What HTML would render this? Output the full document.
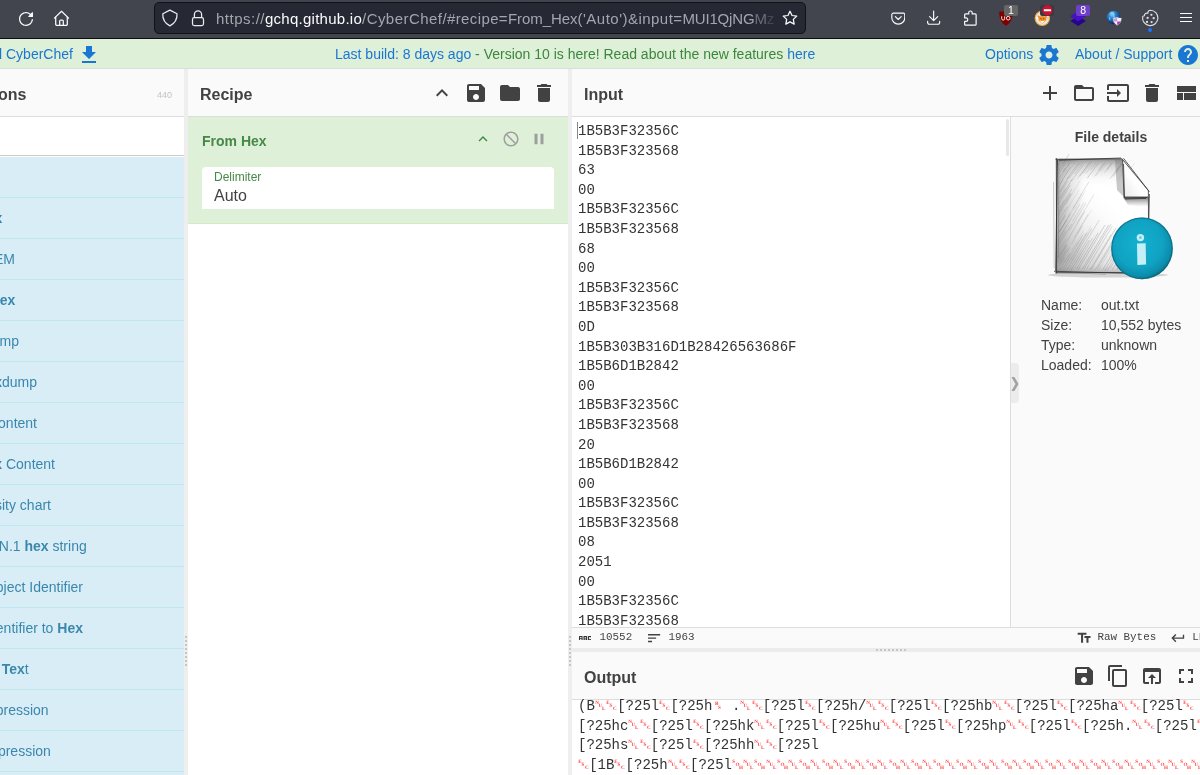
<!DOCTYPE html>
<html>
<head>
<meta charset="utf-8">
<title>CyberChef</title>
<style>
*{box-sizing:border-box;margin:0;padding:0}
html,body{width:1200px;height:775px;overflow:hidden;background:#fff;font-family:"Liberation Sans",sans-serif;color:#424242}
.abs{position:absolute}
#chrome{position:absolute;left:0;top:0;width:1200px;height:39px;background:#42454e;border-bottom:1px solid #0e0e10}
#urlbar{position:absolute;left:154px;top:2px;width:651.5px;height:32px;background:#262834;border-radius:5px;border:1px solid #111218}
#urltext{position:absolute;left:61px;top:6.500px;font-size:15px;line-height:18px;color:#a5a5ad;white-space:nowrap}
#urltext b{font-weight:normal;color:#fbfbfe}
#banner{position:absolute;left:0;top:39px;width:1200px;height:30px;background:#dff0d8;border-bottom:1px solid #ddd;font-size:14px;line-height:30px;white-space:nowrap}
.blue{color:#1976d2}
.green{color:#3c863d}
.title{position:absolute;top:69px;height:48px;background:#fafafa;border-bottom:1px solid #ddd;font-weight:bold;font-size:16px;line-height:51px;color:#424242}
.gutter{position:absolute;background:#eee}
.ico{position:absolute;width:24px;height:24px;fill:#424242}
#ops{position:absolute;left:0;top:157px;width:184px;height:618px;background:#d9edf7}
.op{position:absolute;left:0;width:184px;height:41px;border-bottom:1px solid #bce8f1;font-size:14px;line-height:40px;color:#3a87ad;white-space:nowrap}
.op b{font-weight:bold}
#recop{position:absolute;left:188px;top:117px;width:380px;height:107px;background:#dff0d8;border-bottom:1px solid #d6e9c6}
#arg{position:absolute;left:14px;top:50px;width:352px;height:42px;background:#fff;border-radius:4px 4px 0 0}
.mono{font-family:"Liberation Mono",monospace}
#intext{position:absolute;left:578px;top:122px;font-family:"Liberation Mono",monospace;font-size:14px;line-height:19.6px;color:#333;white-space:pre}
#side{position:absolute;left:1010px;top:117px;width:190px;height:510px;background:#fafafa;border-left:1px solid #ddd}
#status{position:absolute;left:572px;top:627px;width:628px;height:21px;background:#fafafa;border-top:1px solid #ddd;font-family:"Liberation Mono",monospace;font-size:10.9px;color:#444;line-height:19px;white-space:nowrap}
#outtext{position:absolute;left:578px;top:697px;font-family:"Liberation Mono",monospace;font-size:14px;line-height:19.6px;color:#333;white-space:pre}
.cp{display:inline-block;width:11.2px;height:11.2px;vertical-align:baseline;fill:#ff4040;font-family:"Liberation Serif",serif;font-weight:bold;font-size:5.1px;overflow:visible;text-rendering:geometricPrecision}
</style>
</head>
<body>
<div id="root" style="position:absolute;left:0;top:0;width:1200px;height:775px;overflow:hidden;will-change:transform">
<!-- BROWSER CHROME -->
<div id="chrome">
  <!-- reload -->
  <svg class="abs" style="left:18px;top:11px" width="16" height="16" viewBox="0 0 16 16" fill="#fbfbfe"><path d="M10.707 6H14.7l.3-.3V1.707a.5.5 0 0 0-.854-.354l-1.459 1.459A6.95 6.95 0 0 0 8 1C4.141 1 1 4.141 1 8s3.141 7 7 7a6.97 6.97 0 0 0 6.968-6.322.626.626 0 0 0-.562-.682.635.635 0 0 0-.682.562A5.726 5.726 0 0 1 8 13.75c-3.171 0-5.75-2.579-5.75-5.75S4.829 2.25 8 2.25a5.71 5.71 0 0 1 3.805 1.445l-1.451 1.451a.5.5 0 0 0 .353.854z"/></svg>
  <!-- home -->
  <svg class="abs" style="left:53px;top:10px" width="17" height="17" viewBox="0 0 17 17" fill="none" stroke="#fbfbfe" stroke-width="1.250" stroke-linejoin="round" stroke-linecap="round"><path d="M1.400 8.100L8.500 1.300L15.600 8.100"/><path d="M2.700 7V14.200a1.200 1.200 0 0 0 1.200 1.200H13.100a1.200 1.200 0 0 0 1.200-1.200V7"/><path d="M6.700 15.400V11a1 1 0 0 1 1-1H9.300a1 1 0 0 1 1 1V15.400"/></svg>
  <!-- star -->
  <svg class="abs" style="left:782px;top:10.400px;z-index:5" width="16" height="16" viewBox="0 0 16 16" fill="none" stroke="#fbfbfe" stroke-width="1.25" stroke-linejoin="round"><path d="M8 1.2l2.05 4.3 4.7.62-3.43 3.28.85 4.7L8 11.85 3.83 14.1l.85-4.7L1.25 6.12l4.7-.62z"/></svg>
  <!-- pocket -->
  <svg class="abs" style="left:890.700px;top:10.800px" width="14.600" height="14.600" viewBox="0 0 16 16" fill="none" stroke="#fbfbfe" stroke-width="1.25" stroke-linecap="round" stroke-linejoin="round"><path d="M2.6 2.4h10.8a1.7 1.7 0 0 1 1.7 1.7v3.2a7.1 7.1 0 0 1-14.2 0V4.1a1.7 1.7 0 0 1 1.7-1.7z"/><path d="M4.8 6.2L8 9.3l3.2-3.1"/></svg>
  <!-- download -->
  <svg class="abs" style="left:926px;top:9.800px" width="15.300" height="15.300" viewBox="0 0 17 17" fill="none" stroke="#fbfbfe" stroke-width="1.3" stroke-linecap="round" stroke-linejoin="round"><path d="M8.5 1.2v10.4M4 7.4l4.5 4.4L13 7.4"/><path d="M1.8 12.6v1.4a1.8 1.8 0 0 0 1.8 1.8h9.8a1.8 1.8 0 0 0 1.8-1.8v-1.4"/></svg>
  <!-- extensions puzzle -->
  <svg class="abs" style="left:962.600px;top:9.700px" width="15.600" height="16.500" viewBox="0 0 17 18" fill="none" stroke="#fbfbfe" stroke-width="1.3" stroke-linejoin="round"><path d="M6.2 4.3V3a1.9 1.9 0 0 1 3.8 0v1.3h3.3a1 1 0 0 1 1 1v10.2a1 1 0 0 1-1 1H2.8a1 1 0 0 1-1-1v-3.1h1.5a1.9 1.9 0 0 0 0-3.8H1.8V5.3a1 1 0 0 1 1-1z"/></svg>
  <!-- ublock -->
  <svg class="abs" style="left:998px;top:10px" width="16" height="17" viewBox="0 0 16 17"><path d="M1.300 1.600C3.600 1.600 5.800 1.500 8 1.300c2.200 0.200 4.400 0.300 6.700 0.300c0.100 6.500-1.500 11.200-6.700 14.200C2.800 12.800 1.200 8.100 1.300 1.600z" fill="#800000"/><path d="M3.700 6.300v2.300a1.500 1.500 0 0 0 3 0V6.300" stroke="#fff" stroke-width="0.900" fill="none"/><circle cx="10.200" cy="8.200" r="1.800" stroke="#fff" stroke-width="0.900" fill="none"/></svg>
  <div class="abs" style="left:1004.200px;top:5px;width:13.400px;height:10.600px;background:#666;border-radius:2px;color:#fff;font-size:10.500px;line-height:11px;text-align:center">1</div>
  <!-- fox -->
  <svg class="abs" style="left:1034px;top:10px" width="17" height="17" viewBox="0 0 17 17"><circle cx="8.300" cy="8.300" r="7.200" fill="#e9e4dc" stroke="#f0a03c" stroke-width="1.100"/><path d="M3.600 5.200l2.700 1.300 2-0.500 2 0.500 2.700-1.300-0.900 5-3.800 3.600-3.800-3.600z" fill="#f28a1e"/><path d="M1.200 7l3.300 3.600-0.300-3.400z" fill="#fff"/><path d="M15.300 7l-3.300 3.600 0.300-3.400z" fill="#c9c9c9"/><path d="M5.400 10.200l2.900 3.400 2.900-3.400-2.900 1.100z" fill="#fff"/><path d="M6.300 8.600l1.300 0.400M10.300 8.600l-1.300 0.400" stroke="#6a3208" stroke-width="0.700"/></svg>
  <div class="abs" style="left:1040.300px;top:5px;width:13.500px;height:10.600px;background:#3b3b3f;border-radius:2px"></div>
  <svg class="abs" style="left:1041.500px;top:5px" width="11" height="11" viewBox="0 0 11 11"><circle cx="5.400" cy="5.300" r="5.100" fill="#cc1133"/><rect x="1.800" y="4.300" width="7.200" height="2" rx="0.300" fill="#fff"/></svg>
  <!-- layers -->
  <svg class="abs" style="left:1069px;top:10px" width="18" height="17" viewBox="0 0 18 17"><path d="M9.100 6.200l7.800 4.800-7.800 5.100-7.800-5.100z" fill="#24068a"/><path d="M9.100 1l7.800 5.200-7.800 5.300-7.800-5.300z" fill="#4610c4"/></svg>
  <div class="abs" style="left:1076.200px;top:5px;width:13.800px;height:10.600px;background:#6e40c9;border-radius:2px;color:#fff;font-size:10.500px;line-height:11px;text-align:center">8</div>
  <!-- globe -->
  <svg class="abs" style="left:1106px;top:10px" width="17" height="17" viewBox="0 0 17 17"><defs><radialGradient id="gl" cx="0.380" cy="0.280" r="0.750"><stop offset="0" stop-color="#8fd0f5"/><stop offset="0.350" stop-color="#2b86cf"/><stop offset="0.750" stop-color="#0c4a8e"/><stop offset="1" stop-color="#06223f"/></radialGradient></defs><circle cx="7.600" cy="7.500" r="6.800" fill="url(#gl)"/><path d="M4.200 3.200c1.500-0.800 3-0.600 3.600 0.400s-0.600 1.800-0.200 2.800 2 1 2.200 2.200M3 7.500c0.800 0.600 1.200 1.600 0.800 2.800" stroke="#9fe0ff" stroke-width="1.100" fill="none" stroke-opacity=".75"/><path d="M11.200 7.200c-1.200 0.700-2.600 0.900-4.100 0.900 0 3.300 1 5.600 4.100 7.200 3.100-1.600 4.100-3.900 4.100-7.200-1.500 0-2.900-0.200-4.100-0.900z" fill="#f4f0f5" stroke="#d9d2dc" stroke-width="0.400"/><path d="M11.200 7.800v3.700h-3.700c-0.200-1-0.300-1.900-0.300-2.900 1.400 0 2.800-0.200 4-0.800z" fill="#c59ad0"/><path d="M11.200 11.500h3.600c-0.500 1.500-1.600 2.600-3.600 3.600z" fill="#a33fb0"/></svg>
  <!-- cookie -->
  <svg class="abs" style="left:1141px;top:8.900px" width="18" height="18" viewBox="0 0 18 18" fill="none" stroke="#dcdce2" stroke-width="1.150"><path d="M9.300 1.200a2.500 2.500 0 0 0-2.300 3.100 2.600 2.600 0 0 0-3.600 2.500 2.300 2.300 0 0 0-1.800 1 7.700 7.700 0 1 0 7.700-6.600z" stroke-linejoin="round"/><g fill="#dcdce2" stroke="none"><circle cx="6.600" cy="8.900" r="1.150"/><circle cx="10.400" cy="5.800" r="1.150"/><circle cx="12.700" cy="9.200" r="1.150"/><circle cx="6" cy="12.900" r="1.150"/><circle cx="10.600" cy="13.100" r="1.150"/></g></svg>
  <div class="abs" style="left:1147.800px;top:28.100px;width:4.200px;height:4.200px;border-radius:2.100px;background:#1a75ff"></div>
  <!-- hamburger -->
  <div class="abs" style="left:1180px;top:12.900px;width:12.200px;height:1.400px;background:#fbfbfe"></div>
  <div class="abs" style="left:1180px;top:16.800px;width:12.200px;height:1.400px;background:#fbfbfe"></div>
  <div class="abs" style="left:1180px;top:20.700px;width:12.200px;height:1.400px;background:#fbfbfe"></div>

  <div id="urlbar">
    <!-- shield -->
    <svg class="abs" style="left:0;top:0;overflow:visible" width="30" height="30" viewBox="155 3 30 30" fill="none" stroke="#ececf0" stroke-width="1.250" stroke-linejoin="round"><path d="M169.900 10.100L177 13.700C177.300 19.200 175 23.200 169.900 25.900C164.800 23.200 162.500 19.200 162.800 13.700Z"/></svg>
    <!-- lock -->
    <svg class="abs" style="left:0;top:0;overflow:visible" width="60" height="30" viewBox="155 3 60 30" fill="none" stroke="#ececf0" stroke-width="1.250" stroke-linejoin="round"><rect x="192.500" y="17.600" width="11" height="7.900" rx="1.800"/><path d="M194.400 17.600V14.400a3.600 3.600 0 0 1 7.200 0V17.600"/></svg>

    <div id="urltext"><span style="letter-spacing:0.496px">https://</span><span style="letter-spacing:0.257px;color:#fbfbfe">gchq.github.io</span><span style="letter-spacing:0.450px">/CyberChef/</span><span style="letter-spacing:0.379px">#recipe=</span><span style="letter-spacing:-0.064px">From_Hex</span><span style="letter-spacing:0.490px">('Auto')</span><span style="letter-spacing:0.458px">&amp;input=</span><span style="letter-spacing:-0.184px">MUI1QjNG<span style="opacity:.55">M</span><span style="opacity:.25">z</span></span></div>
  </div>
</div>
<!-- BANNER -->
<div id="banner">
  <span class="abs blue" style="left:-1px;top:0">l CyberChef</span>
  <span class="abs" style="left:335px;top:0"><span class="blue">Last build: 8 days ago</span><span class="green"> - Version 10 is here! Read about the new features </span><span class="blue">here</span></span>
  <span class="abs blue" style="left:985px;top:0">Options</span>
  <span class="abs blue" style="left:1075px;top:0">About / Support</span>
</div>
<!-- TITLES -->
<div class="title" style="left:0;width:184px"><span class="abs" style="left:-2px">ons</span><span class="abs" style="left:157px;top:1px;font-size:9px;font-weight:normal;color:#c4c4c4">440</span></div>
<div class="title" style="left:188px;width:380px"><span class="abs" style="left:12px">Recipe</span></div>
<div class="title" style="left:572px;width:628px"><span class="abs" style="left:12px">Input</span></div>
<div class="gutter" style="left:184px;top:69px;width:4px;height:706px"></div>
<div class="gutter" style="left:568px;top:69px;width:4px;height:706px"></div>
<div class="abs" style="left:0;top:117px;width:184px;height:39px;background:#fff;border-bottom:1px solid #ccc"></div>
<!-- OPS -->
<div id="ops" style="overflow:hidden">
<div class="op" style="top:0px"></div>
<div class="op" style="top:41px"><span class="abs" style="right:181.8px;top:0">To <b>Hex</b></span></div>
<div class="op" style="top:82px"><span class="abs" style="right:169.0px;top:0"><b>Hex</b> to PEM</span></div>
<div class="op" style="top:123px"><span class="abs" style="right:168.7px;top:0">From <b>Hex</b></span></div>
<div class="op" style="top:164px"><span class="abs" style="right:165.0px;top:0">To <b>Hex</b>dump</span></div>
<div class="op" style="top:205px"><span class="abs" style="right:147.0px;top:0">From <b>Hex</b>dump</span></div>
<div class="op" style="top:246px"><span class="abs" style="right:147.0px;top:0">To <b>Hex</b> Content</span></div>
<div class="op" style="top:287px"><span class="abs" style="right:129.0px;top:0">From <b>Hex</b> Content</span></div>
<div class="op" style="top:328px"><span class="abs" style="right:133.0px;top:0"><b>Hex</b> Density chart</span></div>
<div class="op" style="top:369px"><span class="abs" style="right:97.3px;top:0">Parse ASN.1 <b>hex</b> string</span></div>
<div class="op" style="top:410px"><span class="abs" style="right:101.0px;top:0"><b>Hex</b> to Object Identifier</span></div>
<div class="op" style="top:451px"><span class="abs" style="right:101.0px;top:0">Object Identifier to <b>Hex</b></span></div>
<div class="op" style="top:492px"><span class="abs" style="right:155.3px;top:0"><b>Hex</b> to <b>Tex</b>t</span></div>
<div class="op" style="top:533px"><span class="abs" style="right:135.4px;top:0">Zlib Decompression</span></div>
<div class="op" style="top:574px"><span class="abs" style="right:133.2px;top:0">Gzip Decompression</span></div>
<div class="op" style="top:615px"></div>
</div>
<!-- RECIPE OP -->
<div id="recop">
  <span class="abs" style="left:14px;top:15px;font-size:14px;font-weight:bold;color:#468847;line-height:18px">From Hex</span>
  <div id="arg">
    <span class="abs" style="left:12px;top:2px;font-size:12px;color:#468847;line-height:16px">Delimiter</span>
    <span class="abs" style="left:12px;top:19px;font-size:16px;color:#424242;line-height:20px">Auto</span>
  </div>
</div>
<!-- INPUT -->
<div id="intext">1B5B3F32356C
1B5B3F323568
63
00
1B5B3F32356C
1B5B3F323568
68
00
1B5B3F32356C
1B5B3F323568
0D
1B5B303B316D1B28426563686F
1B5B6D1B2842
00
1B5B3F32356C
1B5B3F323568
20
1B5B6D1B2842
00
1B5B3F32356C
1B5B3F323568
08
2051
00
1B5B3F32356C
1B5B3F323568</div>
<div class="abs" style="left:577px;top:122px;width:1px;height:17px;background:#888"></div>
<div id="side">
<div class="abs" style="left:0;top:11px;width:200px;text-align:center;font-size:14px;font-weight:bold;line-height:18px;color:#424242">File details</div>
<svg class="abs" style="left:35px;top:37px" width="135" height="135" viewBox="0 0 135 135">
<defs>
<linearGradient id="pgL" x1="0" x2="1" y1="0" y2="0"><stop offset="0" stop-color="#8c8c8c"/><stop offset="0.050" stop-color="#bdbdbd"/><stop offset="0.160" stop-color="#e4e4e4"/><stop offset="0.300" stop-color="#fff"/><stop offset="1" stop-color="#fff"/></linearGradient>
<linearGradient id="pgT" x1="0" x2="0" y1="0" y2="1"><stop offset="0" stop-color="#777" stop-opacity=".8"/><stop offset="0.060" stop-color="#aaa" stop-opacity=".5"/><stop offset="0.170" stop-color="#ddd" stop-opacity=".2"/><stop offset="0.260" stop-color="#fff" stop-opacity="0"/><stop offset="0.900" stop-color="#fff" stop-opacity="0"/><stop offset="1" stop-color="#888" stop-opacity=".55"/></linearGradient>
<linearGradient id="pgD" x1="0" x2="0.550" y1="1" y2="0.300"><stop offset="0" stop-color="#8f8f8f" stop-opacity=".75"/><stop offset="0.450" stop-color="#c4c4c4" stop-opacity=".45"/><stop offset="1" stop-color="#fff" stop-opacity="0"/></linearGradient>
<radialGradient id="ball" cx="0.450" cy="0.420" r="0.600"><stop offset="0" stop-color="#14b0d0"/><stop offset="0.650" stop-color="#10a2c2"/><stop offset="0.880" stop-color="#0c8dab"/><stop offset="1" stop-color="#096e87"/></radialGradient>
<linearGradient id="fold" x1="0" x2="1" y1="1" y2="0"><stop offset="0" stop-color="#e8e8e8"/><stop offset="0.450" stop-color="#fff"/><stop offset="1" stop-color="#f0f0f0"/></linearGradient>
<linearGradient id="fsh" x1="0" x2="0" y1="0" y2="1"><stop offset="0" stop-color="#555" stop-opacity=".8"/><stop offset="1" stop-color="#999" stop-opacity="0"/></linearGradient>
</defs>
<ellipse cx="62" cy="121" rx="60" ry="2.600" fill="#9a9a9a" fill-opacity=".4"/>
<path d="M10.300 5L76.200 5L102.400 36.600L102.400 118.800L10.300 118.800Z" fill="url(#pgL)"/>
<path d="M10.300 5L76.200 5L102.400 36.600L102.400 118.800L10.300 118.800Z" fill="url(#pgD)"/>
<path d="M10.300 5L76.200 5L102.400 36.600L102.400 118.800L10.300 118.800Z" fill="url(#pgT)"/>
<g fill="none"><path d="M12.7 16.9L25.7 -4.0" stroke="#6e6e6e" stroke-opacity="0.39" stroke-width="0.60"/><path d="M12.8 20.0L19.3 9.4" stroke="#6e6e6e" stroke-opacity="0.40" stroke-width="0.60"/><path d="M13.4 23.3L19.2 13.9" stroke="#6e6e6e" stroke-opacity="0.34" stroke-width="0.60"/><path d="M13.4 25.2L24.4 7.5" stroke="#6e6e6e" stroke-opacity="0.26" stroke-width="0.60"/><path d="M13.9 30.0L24.5 12.8" stroke="#6e6e6e" stroke-opacity="0.43" stroke-width="0.60"/><path d="M11.0 31.3L20.6 15.9" stroke="#6e6e6e" stroke-opacity="0.27" stroke-width="0.60"/><path d="M11.7 34.4L16.9 26.0" stroke="#6e6e6e" stroke-opacity="0.39" stroke-width="0.60"/><path d="M13.5 37.9L23.0 22.6" stroke="#6e6e6e" stroke-opacity="0.44" stroke-width="0.60"/><path d="M13.0 41.0L21.9 26.6" stroke="#6e6e6e" stroke-opacity="0.33" stroke-width="0.60"/><path d="M14.0 45.0L26.2 25.2" stroke="#6e6e6e" stroke-opacity="0.46" stroke-width="0.60"/><path d="M11.7 46.6L19.2 34.6" stroke="#6e6e6e" stroke-opacity="0.27" stroke-width="0.60"/><path d="M12.2 50.5L24.5 30.7" stroke="#6e6e6e" stroke-opacity="0.37" stroke-width="0.60"/><path d="M13.5 53.9L18.5 45.9" stroke="#6e6e6e" stroke-opacity="0.31" stroke-width="0.60"/><path d="M12.4 56.8L25.9 35.1" stroke="#6e6e6e" stroke-opacity="0.37" stroke-width="0.60"/><path d="M12.9 58.1L24.6 39.2" stroke="#6e6e6e" stroke-opacity="0.33" stroke-width="0.60"/><path d="M12.0 61.2L25.3 39.7" stroke="#6e6e6e" stroke-opacity="0.48" stroke-width="0.60"/><path d="M11.7 64.2L17.6 54.8" stroke="#6e6e6e" stroke-opacity="0.27" stroke-width="0.60"/><path d="M11.5 68.6L21.3 52.8" stroke="#6e6e6e" stroke-opacity="0.38" stroke-width="0.60"/><path d="M13.2 70.4L19.3 60.5" stroke="#6e6e6e" stroke-opacity="0.44" stroke-width="0.60"/><path d="M12.3 73.2L19.1 62.3" stroke="#6e6e6e" stroke-opacity="0.33" stroke-width="0.60"/><path d="M13.4 77.9L21.0 65.7" stroke="#6e6e6e" stroke-opacity="0.52" stroke-width="0.60"/><path d="M12.2 79.4L24.6 59.5" stroke="#6e6e6e" stroke-opacity="0.44" stroke-width="0.60"/><path d="M14.0 82.2L20.8 71.2" stroke="#6e6e6e" stroke-opacity="0.33" stroke-width="0.60"/><path d="M12.0 86.5L19.5 74.4" stroke="#6e6e6e" stroke-opacity="0.27" stroke-width="0.60"/><path d="M12.7 88.2L19.8 76.8" stroke="#6e6e6e" stroke-opacity="0.43" stroke-width="0.60"/><path d="M12.4 91.7L25.6 70.3" stroke="#6e6e6e" stroke-opacity="0.40" stroke-width="0.60"/><path d="M13.6 95.1L20.1 84.6" stroke="#6e6e6e" stroke-opacity="0.30" stroke-width="0.60"/><path d="M13.5 98.8L20.6 87.3" stroke="#6e6e6e" stroke-opacity="0.31" stroke-width="0.60"/><path d="M13.8 101.5L20.5 90.7" stroke="#6e6e6e" stroke-opacity="0.54" stroke-width="0.60"/><path d="M12.8 104.8L21.4 90.9" stroke="#6e6e6e" stroke-opacity="0.28" stroke-width="0.60"/><path d="M13.9 106.1L20.9 94.7" stroke="#6e6e6e" stroke-opacity="0.46" stroke-width="0.60"/><path d="M13.5 109.5L23.6 93.2" stroke="#6e6e6e" stroke-opacity="0.34" stroke-width="0.60"/><path d="M13.2 112.4L18.7 103.4" stroke="#6e6e6e" stroke-opacity="0.32" stroke-width="0.60"/><path d="M13.6 116.1L23.8 99.5" stroke="#6e6e6e" stroke-opacity="0.33" stroke-width="0.60"/><path d="M15.8 116.4L36.6 81.8" stroke="#6e6e6e" stroke-opacity="0.30" stroke-width="0.60"/><path d="M17.5 116.8L40.3 78.9" stroke="#6e6e6e" stroke-opacity="0.33" stroke-width="0.60"/><path d="M20.3 116.6L45.4 74.8" stroke="#6e6e6e" stroke-opacity="0.49" stroke-width="0.60"/><path d="M23.8 115.0L53.2 66.0" stroke="#6e6e6e" stroke-opacity="0.40" stroke-width="0.60"/><path d="M24.7 116.9L43.2 86.1" stroke="#6e6e6e" stroke-opacity="0.49" stroke-width="0.60"/><path d="M28.4 114.1L46.4 84.2" stroke="#6e6e6e" stroke-opacity="0.41" stroke-width="0.60"/><path d="M30.6 114.8L52.1 78.9" stroke="#6e6e6e" stroke-opacity="0.52" stroke-width="0.60"/><path d="M32.4 115.4L58.9 71.2" stroke="#6e6e6e" stroke-opacity="0.49" stroke-width="0.60"/><path d="M36.3 114.9L62.6 71.0" stroke="#6e6e6e" stroke-opacity="0.49" stroke-width="0.60"/><path d="M38.1 114.9L64.9 70.3" stroke="#6e6e6e" stroke-opacity="0.48" stroke-width="0.60"/><path d="M40.8 114.6L66.2 72.4" stroke="#6e6e6e" stroke-opacity="0.39" stroke-width="0.60"/><path d="M43.8 115.9L65.0 80.7" stroke="#6e6e6e" stroke-opacity="0.40" stroke-width="0.60"/><path d="M45.4 115.1L70.2 73.6" stroke="#6e6e6e" stroke-opacity="0.48" stroke-width="0.60"/><path d="M49.3 115.8L70.3 80.7" stroke="#6e6e6e" stroke-opacity="0.39" stroke-width="0.60"/><path d="M51.3 114.5L64.8 92.0" stroke="#6e6e6e" stroke-opacity="0.45" stroke-width="0.60"/><path d="M53.1 115.2L69.8 87.2" stroke="#6e6e6e" stroke-opacity="0.29" stroke-width="0.60"/><path d="M57.0 115.5L74.3 86.7" stroke="#6e6e6e" stroke-opacity="0.50" stroke-width="0.60"/><path d="M58.7 117.0L72.3 94.3" stroke="#6e6e6e" stroke-opacity="0.42" stroke-width="0.60"/><path d="M61.2 116.5L79.2 86.4" stroke="#6e6e6e" stroke-opacity="0.42" stroke-width="0.60"/><path d="M64.3 114.3L76.7 93.6" stroke="#6e6e6e" stroke-opacity="0.42" stroke-width="0.60"/><path d="M66.4 115.7L81.7 90.2" stroke="#6e6e6e" stroke-opacity="0.49" stroke-width="0.60"/><path d="M70.4 115.8L83.2 94.5" stroke="#6e6e6e" stroke-opacity="0.31" stroke-width="0.60"/><path d="M71.5 115.5L85.2 92.7" stroke="#6e6e6e" stroke-opacity="0.47" stroke-width="0.60"/><path d="M75.2 114.1L84.5 98.7" stroke="#6e6e6e" stroke-opacity="0.27" stroke-width="0.60"/><path d="M77.3 116.2L85.5 102.5" stroke="#6e6e6e" stroke-opacity="0.34" stroke-width="0.60"/><path d="M80.3 115.5L88.3 102.0" stroke="#6e6e6e" stroke-opacity="0.47" stroke-width="0.60"/><path d="M83.6 115.6L89.8 105.3" stroke="#6e6e6e" stroke-opacity="0.23" stroke-width="0.60"/><path d="M85.9 116.9L94.3 102.9" stroke="#6e6e6e" stroke-opacity="0.39" stroke-width="0.60"/><path d="M87.4 114.6L92.2 106.6" stroke="#6e6e6e" stroke-opacity="0.26" stroke-width="0.60"/><path d="M90.3 116.9L97.3 105.2" stroke="#6e6e6e" stroke-opacity="0.29" stroke-width="0.60"/><path d="M20.0 50.1L34.0 26.8" stroke="#6e6e6e" stroke-opacity="0.25" stroke-width="0.60"/><path d="M26.8 54.5L42.7 28.0" stroke="#6e6e6e" stroke-opacity="0.36" stroke-width="0.60"/><path d="M27.6 56.8L39.9 36.2" stroke="#6e6e6e" stroke-opacity="0.19" stroke-width="0.60"/><path d="M18.2 60.5L33.1 35.7" stroke="#6e6e6e" stroke-opacity="0.19" stroke-width="0.60"/><path d="M21.8 63.5L36.5 38.9" stroke="#6e6e6e" stroke-opacity="0.26" stroke-width="0.60"/><path d="M26.6 67.5L38.1 48.4" stroke="#6e6e6e" stroke-opacity="0.32" stroke-width="0.60"/><path d="M30.7 69.4L48.0 40.6" stroke="#6e6e6e" stroke-opacity="0.31" stroke-width="0.60"/><path d="M19.8 73.3L33.8 50.0" stroke="#6e6e6e" stroke-opacity="0.35" stroke-width="0.60"/><path d="M23.3 76.7L40.0 48.9" stroke="#6e6e6e" stroke-opacity="0.33" stroke-width="0.60"/><path d="M31.2 79.7L45.5 56.0" stroke="#6e6e6e" stroke-opacity="0.20" stroke-width="0.60"/><path d="M28.1 83.6L42.2 60.1" stroke="#6e6e6e" stroke-opacity="0.31" stroke-width="0.60"/><path d="M21.0 87.0L38.8 57.4" stroke="#6e6e6e" stroke-opacity="0.37" stroke-width="0.60"/><path d="M25.5 90.0L36.2 72.2" stroke="#6e6e6e" stroke-opacity="0.35" stroke-width="0.60"/><path d="M30.0 92.3L38.1 78.8" stroke="#6e6e6e" stroke-opacity="0.25" stroke-width="0.60"/><path d="M25.7 96.3L38.2 75.6" stroke="#6e6e6e" stroke-opacity="0.16" stroke-width="0.60"/><path d="M29.3 98.1L45.2 71.7" stroke="#6e6e6e" stroke-opacity="0.19" stroke-width="0.60"/><path d="M22.7 102.8L31.4 88.2" stroke="#6e6e6e" stroke-opacity="0.18" stroke-width="0.60"/><path d="M25.2 105.8L41.5 78.7" stroke="#6e6e6e" stroke-opacity="0.30" stroke-width="0.60"/><path d="M15.9 25.9L28.2 9.5" stroke="#6e6e6e" stroke-opacity="0.23" stroke-width="0.60"/><path d="M17.1 18.1L23.5 9.6" stroke="#6e6e6e" stroke-opacity="0.42" stroke-width="0.60"/><path d="M20.7 24.7L32.0 9.6" stroke="#6e6e6e" stroke-opacity="0.37" stroke-width="0.60"/><path d="M22.7 24.3L34.1 9.1" stroke="#6e6e6e" stroke-opacity="0.47" stroke-width="0.60"/><path d="M25.2 27.2L37.7 10.6" stroke="#6e6e6e" stroke-opacity="0.36" stroke-width="0.60"/><path d="M28.6 20.0L37.2 8.6" stroke="#6e6e6e" stroke-opacity="0.35" stroke-width="0.60"/><path d="M31.4 24.7L43.9 8.1" stroke="#6e6e6e" stroke-opacity="0.35" stroke-width="0.60"/><path d="M33.7 22.2L42.5 10.4" stroke="#6e6e6e" stroke-opacity="0.35" stroke-width="0.60"/><path d="M37.0 19.7L45.6 8.2" stroke="#6e6e6e" stroke-opacity="0.32" stroke-width="0.60"/><path d="M40.2 19.0L46.4 10.8" stroke="#6e6e6e" stroke-opacity="0.34" stroke-width="0.60"/><path d="M41.3 24.1L52.3 9.3" stroke="#6e6e6e" stroke-opacity="0.47" stroke-width="0.60"/><path d="M44.7 16.2L50.1 9.0" stroke="#6e6e6e" stroke-opacity="0.39" stroke-width="0.60"/><path d="M48.3 22.7L59.0 8.4" stroke="#6e6e6e" stroke-opacity="0.21" stroke-width="0.60"/><path d="M49.5 21.9L59.4 8.7" stroke="#6e6e6e" stroke-opacity="0.30" stroke-width="0.60"/><path d="M52.5 16.1L57.2 9.9" stroke="#6e6e6e" stroke-opacity="0.42" stroke-width="0.60"/><path d="M54.7 17.5L60.8 9.5" stroke="#6e6e6e" stroke-opacity="0.26" stroke-width="0.60"/><path d="M58.3 18.8L65.4 9.3" stroke="#6e6e6e" stroke-opacity="0.32" stroke-width="0.60"/><path d="M61.0 15.9L66.5 8.5" stroke="#6e6e6e" stroke-opacity="0.39" stroke-width="0.60"/><path d="M63.9 24.8L75.3 9.6" stroke="#6e6e6e" stroke-opacity="0.38" stroke-width="0.60"/><path d="M67.0 22.6L77.4 8.7" stroke="#6e6e6e" stroke-opacity="0.44" stroke-width="0.60"/><path d="M69.8 17.7L76.4 8.9" stroke="#6e6e6e" stroke-opacity="0.48" stroke-width="0.60"/><path d="M71.1 26.6L82.9 11.0" stroke="#6e6e6e" stroke-opacity="0.24" stroke-width="0.60"/><path d="M73.9 18.3L80.0 10.2" stroke="#6e6e6e" stroke-opacity="0.23" stroke-width="0.60"/><path d="M77.8 23.7L88.6 9.3" stroke="#6e6e6e" stroke-opacity="0.24" stroke-width="0.60"/></g>
<path d="M69 6L76.600 5.500L78 43L71 36Z" fill="#777" fill-opacity=".4"/>
<path d="M77 43L102.400 43L102.400 53L82 51Z" fill="url(#fsh)"/>
<path d="M76.600 6L78 43L102 43L102 37.500Z" fill="url(#fold)"/>
<path d="M10.300 4L10.600 119.500M11.500 6L9.600 117M9 118.900L103 118.400M8 117.300L92 119.600M102.400 36.600L102.600 118.800M103.400 40L102 100M9.500 5.200L76.200 4.800M13 6.200L75 4M76.200 5L102.400 36.600M77.500 4.300L103.400 37.800M76.600 6L78 43M77.500 10L78.500 43.500M78 43L102 43M78.500 44.200L101 43.600M79 45L100 44.400" stroke="#2e2e2e" stroke-width="0.900" fill="none" stroke-opacity=".85"/>
<path d="M7.600 28L8.200 114M12.800 9L12.400 104M14 118L60 120.400" stroke="#555" stroke-width="0.500" fill="none" stroke-opacity=".6"/>
<circle cx="96" cy="94.400" r="30.800" fill="url(#ball)"/>
<circle cx="96" cy="94.400" r="30.200" fill="none" stroke="#0a5f75" stroke-width="1.200" stroke-opacity=".6"/>
<circle cx="94.400" cy="83.600" r="3.700" fill="#c5eff7"/><circle cx="94.400" cy="83.600" r="1.300" fill="#5cc6dc"/>
<path d="M91 89.600L99.600 89.200L100.100 110.400L91.400 110.900Z" fill="#c5eff7"/>
</svg>
<div class="abs" style="left:30px;top:178px;font-size:14px;line-height:20px;color:#424242;white-space:nowrap">Name:<br>Size:<br>Type:<br>Loaded:</div>
<div class="abs" style="left:90px;top:178px;font-size:14px;line-height:20px;color:#424242;white-space:nowrap">out.txt<br>10,552 bytes<br>unknown<br>100%</div>
<div class="abs" style="left:0;top:246px;width:8px;height:40px;background:#ececec;border-radius:0 4px 4px 0"><svg class="abs" style="left:0;top:0" width="8" height="40" viewBox="0 0 8 40"><path d="M0.400 14H3.400L7.500 21L3.400 28H0.400L4.500 21Z" fill="#a2a2a2"/></svg></div>
</div>
<div class="abs" style="left:1006px;top:119px;width:3px;height:37px;background:#e6e7e7;border-radius:2px"></div>
<div id="status"><svg class="abs" style="left:6.700px;top:7.800px" width="12.600" height="4.300" viewBox="0 0 12.600 4.300" fill="#333"><path d="M0 0.600a0.600 0.600 0 0 1 0.600-0.600h2.400a0.600 0.600 0 0 1 0.600 0.600V4.300H2.500V3.100H1.100V4.300H0zM1.100 1V2.200H2.500V1z" fill-rule="evenodd"/><path d="M4.500 0h3.100a0.600 0.600 0 0 1 0.600 0.600v3.100a0.600 0.600 0 0 1-0.600 0.600H4.500zM5.600 0.900v0.800h1.500V0.900zM5.600 2.500v0.900h1.500V2.500z" fill-rule="evenodd"/><path d="M9.600 0h2.400a0.600 0.600 0 0 1 0.600 0.600v0.800h-1.100V1H10.100v2.300h1.400V2.900h1.100v0.800a0.600 0.600 0 0 1-0.600 0.600H9.600a0.600 0.600 0 0 1-0.600-0.600V0.600a0.600 0.600 0 0 1 0.600-0.600z"/></svg><span class="abs" style="left:27.500px;top:0">10552</span><svg class="abs" style="left:73.700px;top:1.700px;width:16.200px;height:16.200px;fill:#424242" viewBox="0 0 24 24"><path d="M3 18h6v-2H3v2zM3 6v2h18V6H3zm0 7h12v-2H3v2z"/></svg><span class="abs" style="left:96.500px;top:0">1963</span><svg class="abs" style="left:503.6px;top:1.9px;width:16.2px;height:16.2px;fill:#424242" viewBox="0 0 24 24"><path d="M2.5 4v3h5v12h3V7h5V4h-13zm19 5h-9v3h3v7h3v-7h3V9z"/></svg><span class="abs" style="left:525.4px;top:0">Raw Bytes</span><svg class="abs" style="left:597.7px;top:2.1px;width:16.2px;height:16.2px;fill:#424242" viewBox="0 0 24 24"><path d="M19 7v4H5.83l3.58-3.59L8 6l-6 6 6 6 1.41-1.41L5.83 13H21V7z"/></svg><span class="abs" style="left:620.3px;top:0">LF</span></div>
<!-- OUTPUT -->
<div class="gutter" style="left:572px;top:648px;width:628px;height:4px;background:#ececec"></div>
<div class="title" style="left:572px;top:652px;width:628px"><span class="abs" style="left:12px">Output</span></div>
<div id="outtext">(B<svg class="cp" viewBox="0 0 11.2 11.2"><text x="0.3" y="5.0">N</text><text x="3.5" y="8.0">U</text><text x="6.9" y="11.1">L</text></svg><svg class="cp" viewBox="0 0 11.2 11.2"><text x="0.3" y="5.0">E</text><text x="3.5" y="8.0">S</text><text x="6.9" y="11.1">C</text></svg>[?25l<svg class="cp" viewBox="0 0 11.2 11.2"><text x="0.3" y="5.0">E</text><text x="3.5" y="8.0">S</text><text x="6.9" y="11.1">C</text></svg>[?25h<svg class="cp" viewBox="0 0 11.2 11.2"><text x="2.9" y="5.9">B</text><text x="6.1" y="10.1">S</text></svg> .<svg class="cp" viewBox="0 0 11.2 11.2"><text x="0.3" y="5.0">N</text><text x="3.5" y="8.0">U</text><text x="6.9" y="11.1">L</text></svg><svg class="cp" viewBox="0 0 11.2 11.2"><text x="0.3" y="5.0">E</text><text x="3.5" y="8.0">S</text><text x="6.9" y="11.1">C</text></svg>[?25l<svg class="cp" viewBox="0 0 11.2 11.2"><text x="0.3" y="5.0">E</text><text x="3.5" y="8.0">S</text><text x="6.9" y="11.1">C</text></svg>[?25h/<svg class="cp" viewBox="0 0 11.2 11.2"><text x="0.3" y="5.0">N</text><text x="3.5" y="8.0">U</text><text x="6.9" y="11.1">L</text></svg><svg class="cp" viewBox="0 0 11.2 11.2"><text x="0.3" y="5.0">E</text><text x="3.5" y="8.0">S</text><text x="6.9" y="11.1">C</text></svg>[?25l<svg class="cp" viewBox="0 0 11.2 11.2"><text x="0.3" y="5.0">E</text><text x="3.5" y="8.0">S</text><text x="6.9" y="11.1">C</text></svg>[?25hb<svg class="cp" viewBox="0 0 11.2 11.2"><text x="0.3" y="5.0">N</text><text x="3.5" y="8.0">U</text><text x="6.9" y="11.1">L</text></svg><svg class="cp" viewBox="0 0 11.2 11.2"><text x="0.3" y="5.0">E</text><text x="3.5" y="8.0">S</text><text x="6.9" y="11.1">C</text></svg>[?25l<svg class="cp" viewBox="0 0 11.2 11.2"><text x="0.3" y="5.0">E</text><text x="3.5" y="8.0">S</text><text x="6.9" y="11.1">C</text></svg>[?25ha<svg class="cp" viewBox="0 0 11.2 11.2"><text x="0.3" y="5.0">N</text><text x="3.5" y="8.0">U</text><text x="6.9" y="11.1">L</text></svg><svg class="cp" viewBox="0 0 11.2 11.2"><text x="0.3" y="5.0">E</text><text x="3.5" y="8.0">S</text><text x="6.9" y="11.1">C</text></svg>[?25l<svg class="cp" viewBox="0 0 11.2 11.2"><text x="0.3" y="5.0">E</text><text x="3.5" y="8.0">S</text><text x="6.9" y="11.1">C</text></svg>
[?25hc<svg class="cp" viewBox="0 0 11.2 11.2"><text x="0.3" y="5.0">N</text><text x="3.5" y="8.0">U</text><text x="6.9" y="11.1">L</text></svg><svg class="cp" viewBox="0 0 11.2 11.2"><text x="0.3" y="5.0">E</text><text x="3.5" y="8.0">S</text><text x="6.9" y="11.1">C</text></svg>[?25l<svg class="cp" viewBox="0 0 11.2 11.2"><text x="0.3" y="5.0">E</text><text x="3.5" y="8.0">S</text><text x="6.9" y="11.1">C</text></svg>[?25hk<svg class="cp" viewBox="0 0 11.2 11.2"><text x="0.3" y="5.0">N</text><text x="3.5" y="8.0">U</text><text x="6.9" y="11.1">L</text></svg><svg class="cp" viewBox="0 0 11.2 11.2"><text x="0.3" y="5.0">E</text><text x="3.5" y="8.0">S</text><text x="6.9" y="11.1">C</text></svg>[?25l<svg class="cp" viewBox="0 0 11.2 11.2"><text x="0.3" y="5.0">E</text><text x="3.5" y="8.0">S</text><text x="6.9" y="11.1">C</text></svg>[?25hu<svg class="cp" viewBox="0 0 11.2 11.2"><text x="0.3" y="5.0">N</text><text x="3.5" y="8.0">U</text><text x="6.9" y="11.1">L</text></svg><svg class="cp" viewBox="0 0 11.2 11.2"><text x="0.3" y="5.0">E</text><text x="3.5" y="8.0">S</text><text x="6.9" y="11.1">C</text></svg>[?25l<svg class="cp" viewBox="0 0 11.2 11.2"><text x="0.3" y="5.0">E</text><text x="3.5" y="8.0">S</text><text x="6.9" y="11.1">C</text></svg>[?25hp<svg class="cp" viewBox="0 0 11.2 11.2"><text x="0.3" y="5.0">N</text><text x="3.5" y="8.0">U</text><text x="6.9" y="11.1">L</text></svg><svg class="cp" viewBox="0 0 11.2 11.2"><text x="0.3" y="5.0">E</text><text x="3.5" y="8.0">S</text><text x="6.9" y="11.1">C</text></svg>[?25l<svg class="cp" viewBox="0 0 11.2 11.2"><text x="0.3" y="5.0">E</text><text x="3.5" y="8.0">S</text><text x="6.9" y="11.1">C</text></svg>[?25h.<svg class="cp" viewBox="0 0 11.2 11.2"><text x="0.3" y="5.0">N</text><text x="3.5" y="8.0">U</text><text x="6.9" y="11.1">L</text></svg><svg class="cp" viewBox="0 0 11.2 11.2"><text x="0.3" y="5.0">E</text><text x="3.5" y="8.0">S</text><text x="6.9" y="11.1">C</text></svg>[?25l<svg class="cp" viewBox="0 0 11.2 11.2"><text x="0.3" y="5.0">E</text><text x="3.5" y="8.0">S</text><text x="6.9" y="11.1">C</text></svg>
[?25hs<svg class="cp" viewBox="0 0 11.2 11.2"><text x="0.3" y="5.0">N</text><text x="3.5" y="8.0">U</text><text x="6.9" y="11.1">L</text></svg><svg class="cp" viewBox="0 0 11.2 11.2"><text x="0.3" y="5.0">E</text><text x="3.5" y="8.0">S</text><text x="6.9" y="11.1">C</text></svg>[?25l<svg class="cp" viewBox="0 0 11.2 11.2"><text x="0.3" y="5.0">E</text><text x="3.5" y="8.0">S</text><text x="6.9" y="11.1">C</text></svg>[?25hh<svg class="cp" viewBox="0 0 11.2 11.2"><text x="0.3" y="5.0">N</text><text x="3.5" y="8.0">U</text><text x="6.9" y="11.1">L</text></svg><svg class="cp" viewBox="0 0 11.2 11.2"><text x="0.3" y="5.0">E</text><text x="3.5" y="8.0">S</text><text x="6.9" y="11.1">C</text></svg>[?25l
<svg class="cp" viewBox="0 0 11.2 11.2"><text x="0.3" y="5.0">E</text><text x="3.5" y="8.0">S</text><text x="6.9" y="11.1">C</text></svg>[1B<svg class="cp" viewBox="0 0 11.2 11.2"><text x="0.3" y="5.0">E</text><text x="3.5" y="8.0">S</text><text x="6.9" y="11.1">C</text></svg>[?25h<svg class="cp" viewBox="0 0 11.2 11.2"><text x="0.3" y="5.0">N</text><text x="3.5" y="8.0">U</text><text x="6.9" y="11.1">L</text></svg><svg class="cp" viewBox="0 0 11.2 11.2"><text x="0.3" y="5.0">E</text><text x="3.5" y="8.0">S</text><text x="6.9" y="11.1">C</text></svg>[?25l<svg class="cp" viewBox="0 0 11.2 11.2"><text x="0.3" y="5.0">S</text><text x="3.5" y="8.0">O</text><text x="6.9" y="11.1">H</text></svg><svg class="cp" viewBox="0 0 11.2 11.2"><text x="0.3" y="5.0">N</text><text x="3.5" y="8.0">U</text><text x="6.9" y="11.1">L</text></svg><svg class="cp" viewBox="0 0 11.2 11.2"><text x="0.3" y="5.0">S</text><text x="3.5" y="8.0">O</text><text x="6.9" y="11.1">H</text></svg><svg class="cp" viewBox="0 0 11.2 11.2"><text x="0.3" y="5.0">N</text><text x="3.5" y="8.0">U</text><text x="6.9" y="11.1">L</text></svg><svg class="cp" viewBox="0 0 11.2 11.2"><text x="0.3" y="5.0">S</text><text x="3.5" y="8.0">O</text><text x="6.9" y="11.1">H</text></svg><svg class="cp" viewBox="0 0 11.2 11.2"><text x="0.3" y="5.0">N</text><text x="3.5" y="8.0">U</text><text x="6.9" y="11.1">L</text></svg><svg class="cp" viewBox="0 0 11.2 11.2"><text x="0.3" y="5.0">S</text><text x="3.5" y="8.0">O</text><text x="6.9" y="11.1">H</text></svg><svg class="cp" viewBox="0 0 11.2 11.2"><text x="0.3" y="5.0">N</text><text x="3.5" y="8.0">U</text><text x="6.9" y="11.1">L</text></svg><svg class="cp" viewBox="0 0 11.2 11.2"><text x="0.3" y="5.0">S</text><text x="3.5" y="8.0">O</text><text x="6.9" y="11.1">H</text></svg><svg class="cp" viewBox="0 0 11.2 11.2"><text x="0.3" y="5.0">N</text><text x="3.5" y="8.0">U</text><text x="6.9" y="11.1">L</text></svg><svg class="cp" viewBox="0 0 11.2 11.2"><text x="0.3" y="5.0">S</text><text x="3.5" y="8.0">O</text><text x="6.9" y="11.1">H</text></svg><svg class="cp" viewBox="0 0 11.2 11.2"><text x="0.3" y="5.0">N</text><text x="3.5" y="8.0">U</text><text x="6.9" y="11.1">L</text></svg><svg class="cp" viewBox="0 0 11.2 11.2"><text x="0.3" y="5.0">S</text><text x="3.5" y="8.0">O</text><text x="6.9" y="11.1">H</text></svg><svg class="cp" viewBox="0 0 11.2 11.2"><text x="0.3" y="5.0">N</text><text x="3.5" y="8.0">U</text><text x="6.9" y="11.1">L</text></svg><svg class="cp" viewBox="0 0 11.2 11.2"><text x="0.3" y="5.0">S</text><text x="3.5" y="8.0">O</text><text x="6.9" y="11.1">H</text></svg><svg class="cp" viewBox="0 0 11.2 11.2"><text x="0.3" y="5.0">N</text><text x="3.5" y="8.0">U</text><text x="6.9" y="11.1">L</text></svg><svg class="cp" viewBox="0 0 11.2 11.2"><text x="0.3" y="5.0">S</text><text x="3.5" y="8.0">O</text><text x="6.9" y="11.1">H</text></svg><svg class="cp" viewBox="0 0 11.2 11.2"><text x="0.3" y="5.0">N</text><text x="3.5" y="8.0">U</text><text x="6.9" y="11.1">L</text></svg><svg class="cp" viewBox="0 0 11.2 11.2"><text x="0.3" y="5.0">S</text><text x="3.5" y="8.0">O</text><text x="6.9" y="11.1">H</text></svg><svg class="cp" viewBox="0 0 11.2 11.2"><text x="0.3" y="5.0">N</text><text x="3.5" y="8.0">U</text><text x="6.9" y="11.1">L</text></svg><svg class="cp" viewBox="0 0 11.2 11.2"><text x="0.3" y="5.0">S</text><text x="3.5" y="8.0">O</text><text x="6.9" y="11.1">H</text></svg><svg class="cp" viewBox="0 0 11.2 11.2"><text x="0.3" y="5.0">N</text><text x="3.5" y="8.0">U</text><text x="6.9" y="11.1">L</text></svg><svg class="cp" viewBox="0 0 11.2 11.2"><text x="0.3" y="5.0">S</text><text x="3.5" y="8.0">O</text><text x="6.9" y="11.1">H</text></svg><svg class="cp" viewBox="0 0 11.2 11.2"><text x="0.3" y="5.0">N</text><text x="3.5" y="8.0">U</text><text x="6.9" y="11.1">L</text></svg><svg class="cp" viewBox="0 0 11.2 11.2"><text x="0.3" y="5.0">S</text><text x="3.5" y="8.0">O</text><text x="6.9" y="11.1">H</text></svg><svg class="cp" viewBox="0 0 11.2 11.2"><text x="0.3" y="5.0">N</text><text x="3.5" y="8.0">U</text><text x="6.9" y="11.1">L</text></svg><svg class="cp" viewBox="0 0 11.2 11.2"><text x="0.3" y="5.0">S</text><text x="3.5" y="8.0">O</text><text x="6.9" y="11.1">H</text></svg><svg class="cp" viewBox="0 0 11.2 11.2"><text x="0.3" y="5.0">N</text><text x="3.5" y="8.0">U</text><text x="6.9" y="11.1">L</text></svg><svg class="cp" viewBox="0 0 11.2 11.2"><text x="0.3" y="5.0">S</text><text x="3.5" y="8.0">O</text><text x="6.9" y="11.1">H</text></svg><svg class="cp" viewBox="0 0 11.2 11.2"><text x="0.3" y="5.0">N</text><text x="3.5" y="8.0">U</text><text x="6.9" y="11.1">L</text></svg><svg class="cp" viewBox="0 0 11.2 11.2"><text x="0.3" y="5.0">S</text><text x="3.5" y="8.0">O</text><text x="6.9" y="11.1">H</text></svg><svg class="cp" viewBox="0 0 11.2 11.2"><text x="0.3" y="5.0">N</text><text x="3.5" y="8.0">U</text><text x="6.9" y="11.1">L</text></svg><svg class="cp" viewBox="0 0 11.2 11.2"><text x="0.3" y="5.0">S</text><text x="3.5" y="8.0">O</text><text x="6.9" y="11.1">H</text></svg><svg class="cp" viewBox="0 0 11.2 11.2"><text x="0.3" y="5.0">N</text><text x="3.5" y="8.0">U</text><text x="6.9" y="11.1">L</text></svg><svg class="cp" viewBox="0 0 11.2 11.2"><text x="0.3" y="5.0">S</text><text x="3.5" y="8.0">O</text><text x="6.9" y="11.1">H</text></svg><svg class="cp" viewBox="0 0 11.2 11.2"><text x="0.3" y="5.0">N</text><text x="3.5" y="8.0">U</text><text x="6.9" y="11.1">L</text></svg><svg class="cp" viewBox="0 0 11.2 11.2"><text x="0.3" y="5.0">S</text><text x="3.5" y="8.0">O</text><text x="6.9" y="11.1">H</text></svg><svg class="cp" viewBox="0 0 11.2 11.2"><text x="0.3" y="5.0">N</text><text x="3.5" y="8.0">U</text><text x="6.9" y="11.1">L</text></svg><svg class="cp" viewBox="0 0 11.2 11.2"><text x="0.3" y="5.0">S</text><text x="3.5" y="8.0">O</text><text x="6.9" y="11.1">H</text></svg><svg class="cp" viewBox="0 0 11.2 11.2"><text x="0.3" y="5.0">N</text><text x="3.5" y="8.0">U</text><text x="6.9" y="11.1">L</text></svg><svg class="cp" viewBox="0 0 11.2 11.2"><text x="0.3" y="5.0">S</text><text x="3.5" y="8.0">O</text><text x="6.9" y="11.1">H</text></svg><svg class="cp" viewBox="0 0 11.2 11.2"><text x="0.3" y="5.0">N</text><text x="3.5" y="8.0">U</text><text x="6.9" y="11.1">L</text></svg><svg class="cp" viewBox="0 0 11.2 11.2"><text x="0.3" y="5.0">S</text><text x="3.5" y="8.0">O</text><text x="6.9" y="11.1">H</text></svg><svg class="cp" viewBox="0 0 11.2 11.2"><text x="0.3" y="5.0">N</text><text x="3.5" y="8.0">U</text><text x="6.9" y="11.1">L</text></svg><svg class="cp" viewBox="0 0 11.2 11.2"><text x="0.3" y="5.0">S</text><text x="3.5" y="8.0">O</text><text x="6.9" y="11.1">H</text></svg><svg class="cp" viewBox="0 0 11.2 11.2"><text x="0.3" y="5.0">N</text><text x="3.5" y="8.0">U</text><text x="6.9" y="11.1">L</text></svg><svg class="cp" viewBox="0 0 11.2 11.2"><text x="0.3" y="5.0">S</text><text x="3.5" y="8.0">O</text><text x="6.9" y="11.1">H</text></svg><svg class="cp" viewBox="0 0 11.2 11.2"><text x="0.3" y="5.0">N</text><text x="3.5" y="8.0">U</text><text x="6.9" y="11.1">L</text></svg><svg class="cp" viewBox="0 0 11.2 11.2"><text x="0.3" y="5.0">S</text><text x="3.5" y="8.0">O</text><text x="6.9" y="11.1">H</text></svg><svg class="cp" viewBox="0 0 11.2 11.2"><text x="0.3" y="5.0">N</text><text x="3.5" y="8.0">U</text><text x="6.9" y="11.1">L</text></svg><svg class="cp" viewBox="0 0 11.2 11.2"><text x="0.3" y="5.0">S</text><text x="3.5" y="8.0">O</text><text x="6.9" y="11.1">H</text></svg><svg class="cp" viewBox="0 0 11.2 11.2"><text x="0.3" y="5.0">N</text><text x="3.5" y="8.0">U</text><text x="6.9" y="11.1">L</text></svg><svg class="cp" viewBox="0 0 11.2 11.2"><text x="0.3" y="5.0">S</text><text x="3.5" y="8.0">O</text><text x="6.9" y="11.1">H</text></svg><svg class="cp" viewBox="0 0 11.2 11.2"><text x="0.3" y="5.0">N</text><text x="3.5" y="8.0">U</text><text x="6.9" y="11.1">L</text></svg><svg class="cp" viewBox="0 0 11.2 11.2"><text x="0.3" y="5.0">S</text><text x="3.5" y="8.0">O</text><text x="6.9" y="11.1">H</text></svg><svg class="cp" viewBox="0 0 11.2 11.2"><text x="0.3" y="5.0">N</text><text x="3.5" y="8.0">U</text><text x="6.9" y="11.1">L</text></svg><svg class="cp" viewBox="0 0 11.2 11.2"><text x="0.3" y="5.0">S</text><text x="3.5" y="8.0">O</text><text x="6.9" y="11.1">H</text></svg><svg class="cp" viewBox="0 0 11.2 11.2"><text x="0.3" y="5.0">N</text><text x="3.5" y="8.0">U</text><text x="6.9" y="11.1">L</text></svg><svg class="cp" viewBox="0 0 11.2 11.2"><text x="0.3" y="5.0">S</text><text x="3.5" y="8.0">O</text><text x="6.9" y="11.1">H</text></svg><svg class="cp" viewBox="0 0 11.2 11.2"><text x="0.3" y="5.0">N</text><text x="3.5" y="8.0">U</text><text x="6.9" y="11.1">L</text></svg></div>
<div class="abs" style="left:185px;top:636px;width:2px;height:30px;background:repeating-linear-gradient(to bottom,#c6c6c6 0,#c6c6c6 2px,transparent 2px,transparent 4px)"></div>
<div class="abs" style="left:569px;top:636px;width:2px;height:30px;background:repeating-linear-gradient(to bottom,#c6c6c6 0,#c6c6c6 2px,transparent 2px,transparent 4px)"></div>
<div class="abs" style="left:876px;top:649px;width:30px;height:2px;background:repeating-linear-gradient(to right,#c6c6c6 0,#c6c6c6 2px,transparent 2px,transparent 4px)"></div>
<!-- ICONS -->
<svg class="ico" style="left:430px;top:81px;width:24px;height:24px;fill:#424242" viewBox="0 0 24 24"><path d="M7.41 15.41L12 10.83l4.59 4.58L18 14l-6-6-6 6z"/></svg>
<svg class="ico" style="left:464px;top:81px;width:24px;height:24px;fill:#424242" viewBox="0 0 24 24"><path d="M17 3H5c-1.11 0-2 .9-2 2v14c0 1.1.89 2 2 2h14c1.1 0 2-.9 2-2V7l-4-4zm-5 16c-1.66 0-3-1.34-3-3s1.34-3 3-3 3 1.34 3 3-1.34 3-3 3zm3-10H5V5h10v4z"/></svg>
<svg class="ico" style="left:498px;top:81px;width:24px;height:24px;fill:#424242" viewBox="0 0 24 24"><path d="M10 4H4c-1.1 0-1.99.9-1.99 2L2 18c0 1.1.9 2 2 2h16c1.1 0 2-.9 2-2V8c0-1.1-.9-2-2-2h-8l-2-2z"/></svg>
<svg class="ico" style="left:532px;top:81px;width:24px;height:24px;fill:#424242" viewBox="0 0 24 24"><path d="M6 19c0 1.1.9 2 2 2h8c1.1 0 2-.9 2-2V7H6v12zM19 4h-3.5l-1-1h-5l-1 1H5v2h14V4z"/></svg>
<svg class="ico" style="left:1038px;top:81px;width:24px;height:24px;fill:#424242" viewBox="0 0 24 24"><path d="M19 13h-6v6h-2v-6H5v-2h6V5h2v6h6v2z"/></svg>
<svg class="ico" style="left:1072px;top:81px;width:24px;height:24px;fill:#424242" viewBox="0 0 24 24"><path d="M20 6h-8l-2-2H4c-1.1 0-1.99.9-1.99 2L2 18c0 1.1.9 2 2 2h16c1.1 0 2-.9 2-2V8c0-1.1-.9-2-2-2zm0 12H4V8h16v10z"/></svg>
<svg class="ico" style="left:1106px;top:81px;width:24px;height:24px;fill:#424242" viewBox="0 0 24 24"><path d="M21 3.01H3c-1.1 0-2 .9-2 2V9h2V4.99h18v14.03H3V15H1v4.01c0 1.1.9 1.98 2 1.98h18c1.1 0 2-.88 2-1.98v-14c0-1.11-.9-2-2-2zM11 16l4-4-4-4v3H1v2h10v3z"/></svg>
<svg class="ico" style="left:1140px;top:81px;width:24px;height:24px;fill:#424242" viewBox="0 0 24 24"><path d="M6 19c0 1.1.9 2 2 2h8c1.1 0 2-.9 2-2V7H6v12zM19 4h-3.5l-1-1h-5l-1 1H5v2h14V4z"/></svg>
<svg class="ico" style="left:1174px;top:81px;width:24px;height:24px;fill:#424242" viewBox="0 0 24 24"><path d="M3 19h6v-7H3v7zm7 0h12v-7H10v7zM3 5v6h19V5H3z"/></svg>
<svg class="ico" style="left:1072px;top:664px;width:24px;height:24px;fill:#424242" viewBox="0 0 24 24"><path d="M17 3H5c-1.11 0-2 .9-2 2v14c0 1.1.89 2 2 2h14c1.1 0 2-.9 2-2V7l-4-4zm-5 16c-1.66 0-3-1.34-3-3s1.34-3 3-3 3 1.34 3 3-1.34 3-3 3zm3-10H5V5h10v4z"/></svg>
<svg class="ico" style="left:1106px;top:664px;width:24px;height:24px;fill:#424242" viewBox="0 0 24 24"><path d="M16 1H4c-1.1 0-2 .9-2 2v14h2V3h12V1zm3 4H8c-1.1 0-2 .9-2 2v14c0 1.1.9 2 2 2h11c1.1 0 2-.9 2-2V7c0-1.1-.9-2-2-2zm0 16H8V7h11v14z"/></svg>
<svg class="ico" style="left:1140px;top:664px;width:24px;height:24px;fill:#424242" viewBox="0 0 24 24"><path d="M19 4H5c-1.11 0-2 .9-2 2v12c0 1.1.89 2 2 2h4v-2H5V8h14v10h-4v2h4c1.1 0 2-.9 2-2V6c0-1.1-.89-2-2-2zm-7 6l-4 4h3v6h2v-6h3l-4-4z"/></svg>
<svg class="ico" style="left:1174px;top:664px;width:24px;height:24px;fill:#424242" viewBox="0 0 24 24"><path d="M7 14H5v5h5v-2H7v-3zm-2-4h2V7h3V5H5v5zm12 7h-3v2h5v-5h-2v3zM14 5v2h3v3h2V5h-5z"/></svg>
<svg class="ico" style="left:474px;top:130px;width:18px;height:18px;fill:#468847" viewBox="0 0 24 24"><path d="M7.41 15.41L12 10.83l4.59 4.58L18 14l-6-6-6 6z"/></svg>
<svg class="ico" style="left:502px;top:130px;width:18px;height:18px;fill:#9e9e9e" viewBox="0 0 24 24"><path d="M12 2C6.48 2 2 6.48 2 12s4.48 10 10 10 10-4.48 10-10S17.52 2 12 2zm0 18c-4.42 0-8-3.58-8-8 0-1.85.63-3.55 1.69-4.9L16.9 18.31C15.55 19.37 13.85 20 12 20zm6.31-3.1L7.1 5.69C8.45 4.63 10.15 4 12 4c4.42 0 8 3.58 8 8 0 1.85-.63 3.55-1.69 4.9z"/></svg>
<svg class="ico" style="left:530px;top:130px;width:18px;height:18px;fill:#9e9e9e" viewBox="0 0 24 24"><path d="M6 19h4V5H6v14zm8-14v14h4V5h-4z"/></svg>
<svg class="ico" style="left:77px;top:42.700px;width:24px;height:24px;fill:#1976d2" viewBox="0 0 24 24"><path d="M19 9h-4V3H9v6H5l7 7 7-7zM5 18v2h14v-2H5z"/></svg>
<svg class="ico" style="left:1037px;top:42.700px;width:24px;height:24px;fill:#1976d2" viewBox="0 0 24 24"><path d="M19.43 12.98c.04-.32.07-.64.07-.98s-.03-.66-.07-.98l2.11-1.65c.19-.15.24-.42.12-.64l-2-3.46c-.12-.22-.39-.3-.61-.22l-2.49 1c-.52-.4-1.08-.73-1.69-.98l-.38-2.65C14.46 2.18 14.25 2 14 2h-4c-.25 0-.46.18-.49.42l-.38 2.65c-.61.25-1.17.59-1.69.98l-2.49-1c-.23-.09-.49 0-.61.22l-2 3.46c-.13.22-.07.49.12.64l2.11 1.65c-.04.32-.07.65-.07.98s.03.66.07.98l-2.11 1.65c-.19.15-.24.42-.12.64l2 3.46c.12.22.39.3.61.22l2.49-1c.52.4 1.08.73 1.69.98l.38 2.65c.03.24.24.42.49.42h4c.25 0 .46-.18.49-.42l.38-2.65c.61-.25 1.17-.59 1.69-.98l2.49 1c.23.09.49 0 .61-.22l2-3.46c.12-.22.07-.49-.12-.64l-2.11-1.65zM12 15.5c-1.93 0-3.5-1.57-3.5-3.5s1.57-3.5 3.5-3.5 3.5 1.57 3.5 3.5-1.57 3.5-3.5 3.5z"/></svg>
<svg class="ico" style="left:1176px;top:42.700px;width:24px;height:24px;fill:#1976d2" viewBox="0 0 24 24"><path d="M12 2C6.48 2 2 6.48 2 12s4.48 10 10 10 10-4.48 10-10S17.52 2 12 2zm1 17h-2v-2h2v2zm2.07-7.75l-.9.92C13.45 12.9 13 13.5 13 15h-2v-.5c0-1.1.45-2.1 1.17-2.83l1.24-1.26c.37-.36.59-.86.59-1.41 0-1.1-.9-2-2-2s-2 .9-2 2H8c0-2.21 1.79-4 4-4s4 1.79 4 4c0 .88-.36 1.68-.93 2.25z"/></svg>
</div>
</body>
</html>
